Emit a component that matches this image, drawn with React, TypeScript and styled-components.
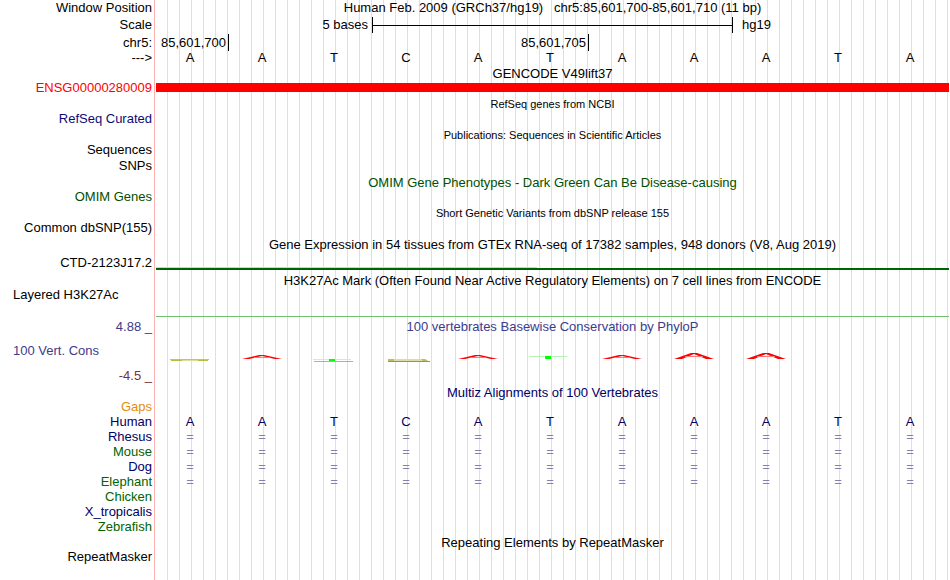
import React from "react";
import styled, { createGlobalStyle } from "styled-components";

const GlobalStyle = createGlobalStyle`
  body {
    margin: 0;
    background: #ffffff;
    color: #000000;
    font-family: "Liberation Sans", Arial, sans-serif;
    font-size: 13px;
    line-height: 15px;
  }
`;

const Browser = styled.main`
  display: grid;
  min-height: 100vh;
  overflow: hidden;
`;

const Guides = styled.div`
  grid-area: 1 / 1;
  margin-left: 154px;
  border-left: 1px solid #ffb0b0;
  padding: 0 2px 0 1px;
  background-image: linear-gradient(to left, #dcdcfa 1px, transparent 1px);
  background-size: calc(100% / 66) 100%;
  background-origin: content-box;
  background-clip: content-box;
`;

const Tracks = styled.div`
  grid-area: 1 / 1;
  min-width: 0;
`;

const Row = styled.div<{ $before?: number; $height?: number; $line?: number }>`
  display: grid;
  grid-template-columns: 152px minmax(0, 1fr);
  column-gap: 4px;
  margin-top: ${(p) => p.$before ?? 0}px;
  height: ${(p) => p.$height ?? 15}px;
  line-height: ${(p) => p.$line ?? 15}px;
  white-space: pre;
`;

const Label = styled.div<{ $color?: string; $left?: boolean }>`
  text-align: ${(p) => (p.$left ? "left" : "right")};
  padding-left: ${(p) => (p.$left ? 13 : 0)}px;
  color: ${(p) => p.$color ?? "#000000"};
`;

const Title = styled.div<{ $color?: string }>`
  grid-column: 2;
  text-align: center;
  padding-right: 1px;
  color: ${(p) => p.$color ?? "#000000"};
`;

const SmallTitle = styled(Title)`
  font-size: 11px;
  line-height: 17px;
`;

const Bases = styled.div<{ $color?: string }>`
  grid-column: 2;
  display: grid;
  grid-template-columns: repeat(11, minmax(0, 1fr));
  margin-right: 2px;
  color: ${(p) => p.$color ?? "#000000"};
`;

const Base = styled.span`
  text-align: center;
  padding-right: 4px;
`;

const ScaleLabel = styled.span`
  grid-column: 1 / 4;
  text-align: right;
  padding-right: 4px;
`;

const ScaleBar = styled.div`
  grid-column: 4 / 9;
  display: flex;
  align-items: center;
  border: solid #000000;
  border-width: 0 1px;
  margin-right: -1px;
  &::before {
    content: "";
    flex: 1;
    height: 1px;
    background: #000000;
  }
`;

const Assembly = styled.span`
  padding-left: 10px;
`;

const Position = styled.span<{ $column: number }>`
  grid-column: ${(p) => p.$column};
  grid-row: 1;
  display: flex;
  justify-content: flex-end;
  border-right: 1px solid #000000;
  margin-right: -1px;
  padding-right: 2px;
`;

const GeneBar = styled.div`
  height: 9px;
  margin: 3px 1px 0 0;
  background: #ff0000;
`;

const Signal = styled.div`
  grid-column: 2;
  align-self: end;
  margin-right: 1px;
`;

const Baseline = styled.div<{ $color: string; $thick?: boolean }>`
  height: ${(p) => (p.$thick ? 2 : 1)}px;
  background: ${(p) => p.$color};
`;

const GeneExtent = styled.div`
  width: 48%;
  height: 1px;
  background: #c8d8c8;
`;

const Glyph = styled.svg`
  display: block;
  width: 100%;
  height: 20px;
`;

const sequence = "AATCATAAATA".split("");

type Shape = "flatA" | "lowA" | "highA" | "splitT" | "T" | "C" | "none";
const scores: Shape[] = [
  "flatA", "lowA", "splitT", "C", "lowA", "T", "lowA", "highA", "highA", "none", "none",
];

function Score({ shape }: { shape: Shape }) {
  return (
    <Glyph viewBox="0 0 72 20" aria-hidden="true">
      {shape === "flatA" && (
        <>
          <path d="M14 16.5H53" stroke="#f5a09a" />
          <path d="M15 17.5H26M42 17.5H52" stroke="#b9bd3c" />
          <path d="M26 17.5H42" stroke="#dddd9c" />
        </>
      )}
      {shape === "lowA" && (
        <>
          <path d="M14 16L31 12H36L54 16H47L34 13L21 16Z" fill="#ff0000" />
          <path d="M26 14.5H42" stroke="#ff7777" />
        </>
      )}
      {shape === "highA" && (
        <>
          <path d="M14 16L31 10H37L54 16H46L34 11L22 16Z" fill="#ff0000" />
          <path d="M25 13.5H43" stroke="#ff7777" />
        </>
      )}
      {shape === "splitT" && (
        <>
          <path d="M13 16.5H51" stroke="#c4f3c4" />
          <path d="M14 18.5H53" stroke="#ff8c8c" />
          <path d="M29 16H35V18H29Z" fill="#00ff00" />
        </>
      )}
      {shape === "T" && (
        <>
          <path d="M13 13.5H51" stroke="#b4f5b4" />
          <path d="M29 13H35V16H29Z" fill="#00ff00" />
        </>
      )}
      {shape === "C" && (
        <>
          <path d="M16 16H53L56 18H16Z" fill="#dedca6" />
          <path d="M16 16H22V18H16ZM49 16H53L56 18H51Z" fill="#c1bd5c" />
          <path d="M16 18.5H58" stroke="#8080f0" />
        </>
      )}
    </Glyph>
  );
}

const navy = "#000064";
const green = "#006400";
const slate = "#3c3c8c";

const species = [
  { name: "Rhesus", color: navy, aligned: true },
  { name: "Mouse", color: green, aligned: true },
  { name: "Dog", color: navy, aligned: true },
  { name: "Elephant", color: green, aligned: true },
  { name: "Chicken", color: green, aligned: false },
  { name: "X_tropicalis", color: navy, aligned: false },
  { name: "Zebrafish", color: green, aligned: false },
];

function BaseRow({ symbols, color }: { symbols: string[]; color?: string }) {
  return (
    <Bases $color={color}>
      {symbols.map((s, i) => (
        <Base key={i}>{s}</Base>
      ))}
    </Bases>
  );
}

export default function App() {
  return (
    <>
      <GlobalStyle />
      <Browser>
        <Guides />
        <Tracks>
          <Row $height={17}>
            <Label>Window Position</Label>
            <Title>{"Human Feb. 2009 (GRCh37/hg19)   chr5:85,601,700-85,601,710 (11 bp)"}</Title>
          </Row>
          <Row $height={16}>
            <Label>Scale</Label>
            <Bases>
              <ScaleLabel>5 bases</ScaleLabel>
              <ScaleBar />
              <Assembly>hg19</Assembly>
            </Bases>
          </Row>
          <Row $before={1} $line={17}>
            <Label>chr5:</Label>
            <Bases>
              <Position $column={1}>85,601,700</Position>
              <Position $column={6}>85,601,705</Position>
            </Bases>
          </Row>
          <Row $before={1}>
            <Label>---&gt;</Label>
            <BaseRow symbols={sequence} />
          </Row>

          <Row $before={1} $height={14}>
            <Title>GENCODE V49lift37</Title>
          </Row>
          <Row $height={16}>
            <Label $color="#ff0000">ENSG00000280009</Label>
            <GeneBar />
          </Row>
          <Row>
            <SmallTitle>RefSeq genes from NCBI</SmallTitle>
          </Row>
          <Row>
            <Label $color="#0c0c78">RefSeq Curated</Label>
          </Row>
          <Row $before={1}>
            <SmallTitle>Publications: Sequences in Scientific Articles</SmallTitle>
          </Row>
          <Row>
            <Label>Sequences</Label>
          </Row>
          <Row $before={1}>
            <Label>SNPs</Label>
          </Row>
          <Row $before={2} $height={14}>
            <Title $color="#005000">OMIM Gene Phenotypes - Dark Green Can Be Disease-causing</Title>
          </Row>
          <Row>
            <Label $color="#005000">OMIM Genes</Label>
          </Row>
          <Row $before={1}>
            <SmallTitle>Short Genetic Variants from dbSNP release 155</SmallTitle>
          </Row>
          <Row>
            <Label>Common dbSNP(155)</Label>
          </Row>
          <Row $before={2}>
            <Title>Gene Expression in 54 tissues from GTEx RNA-seq of 17382 samples, 948 donors (V8, Aug 2019)</Title>
          </Row>
          <Row $before={3}>
            <Label>CTD-2123J17.2</Label>
            <Signal>
              <GeneExtent />
              <Baseline $color={green} $thick />
            </Signal>
          </Row>
          <Row $before={3} $height={14}>
            <Title>H3K27Ac Mark (Often Found Near Active Regulatory Elements) on 7 cell lines from ENCODE</Title>
          </Row>
          <Row $height={30}>
            <Label $left>Layered H3K27Ac</Label>
            <Signal>
              <Baseline $color="#70c070" />
            </Signal>
          </Row>

          <Row $before={2}>
            <Label $color={slate}>4.88 _</Label>
            <Title $color={slate}>100 vertebrates Basewise Conservation by PhyloP</Title>
          </Row>
          <Row $before={9} $height={20}>
            <Label $left $color={slate}>100 Vert. Cons</Label>
            <Bases>
              {scores.map((shape, i) => (
                <Score key={i} shape={shape} />
              ))}
            </Bases>
          </Row>
          <Row $before={5}>
            <Label $color="#783232">-4.5 _</Label>
          </Row>

          <Row $before={2} $height={14}>
            <Title $color={navy}>Multiz Alignments of 100 Vertebrates</Title>
          </Row>
          <Row>
            <Label $color="#e68c0a">Gaps</Label>
          </Row>
          <Row>
            <Label $color={navy}>Human</Label>
            <BaseRow symbols={sequence} color={navy} />
          </Row>
          {species.map((s) => (
            <Row key={s.name}>
              <Label $color={s.color}>{s.name}</Label>
              {s.aligned && <BaseRow symbols={sequence.map(() => "=")} color="#8080b4" />}
            </Row>
          ))}
          <Row $before={1} $height={14}>
            <Title>Repeating Elements by RepeatMasker</Title>
          </Row>
          <Row>
            <Label>RepeatMasker</Label>
          </Row>
        </Tracks>
      </Browser>
    </>
  );
}
